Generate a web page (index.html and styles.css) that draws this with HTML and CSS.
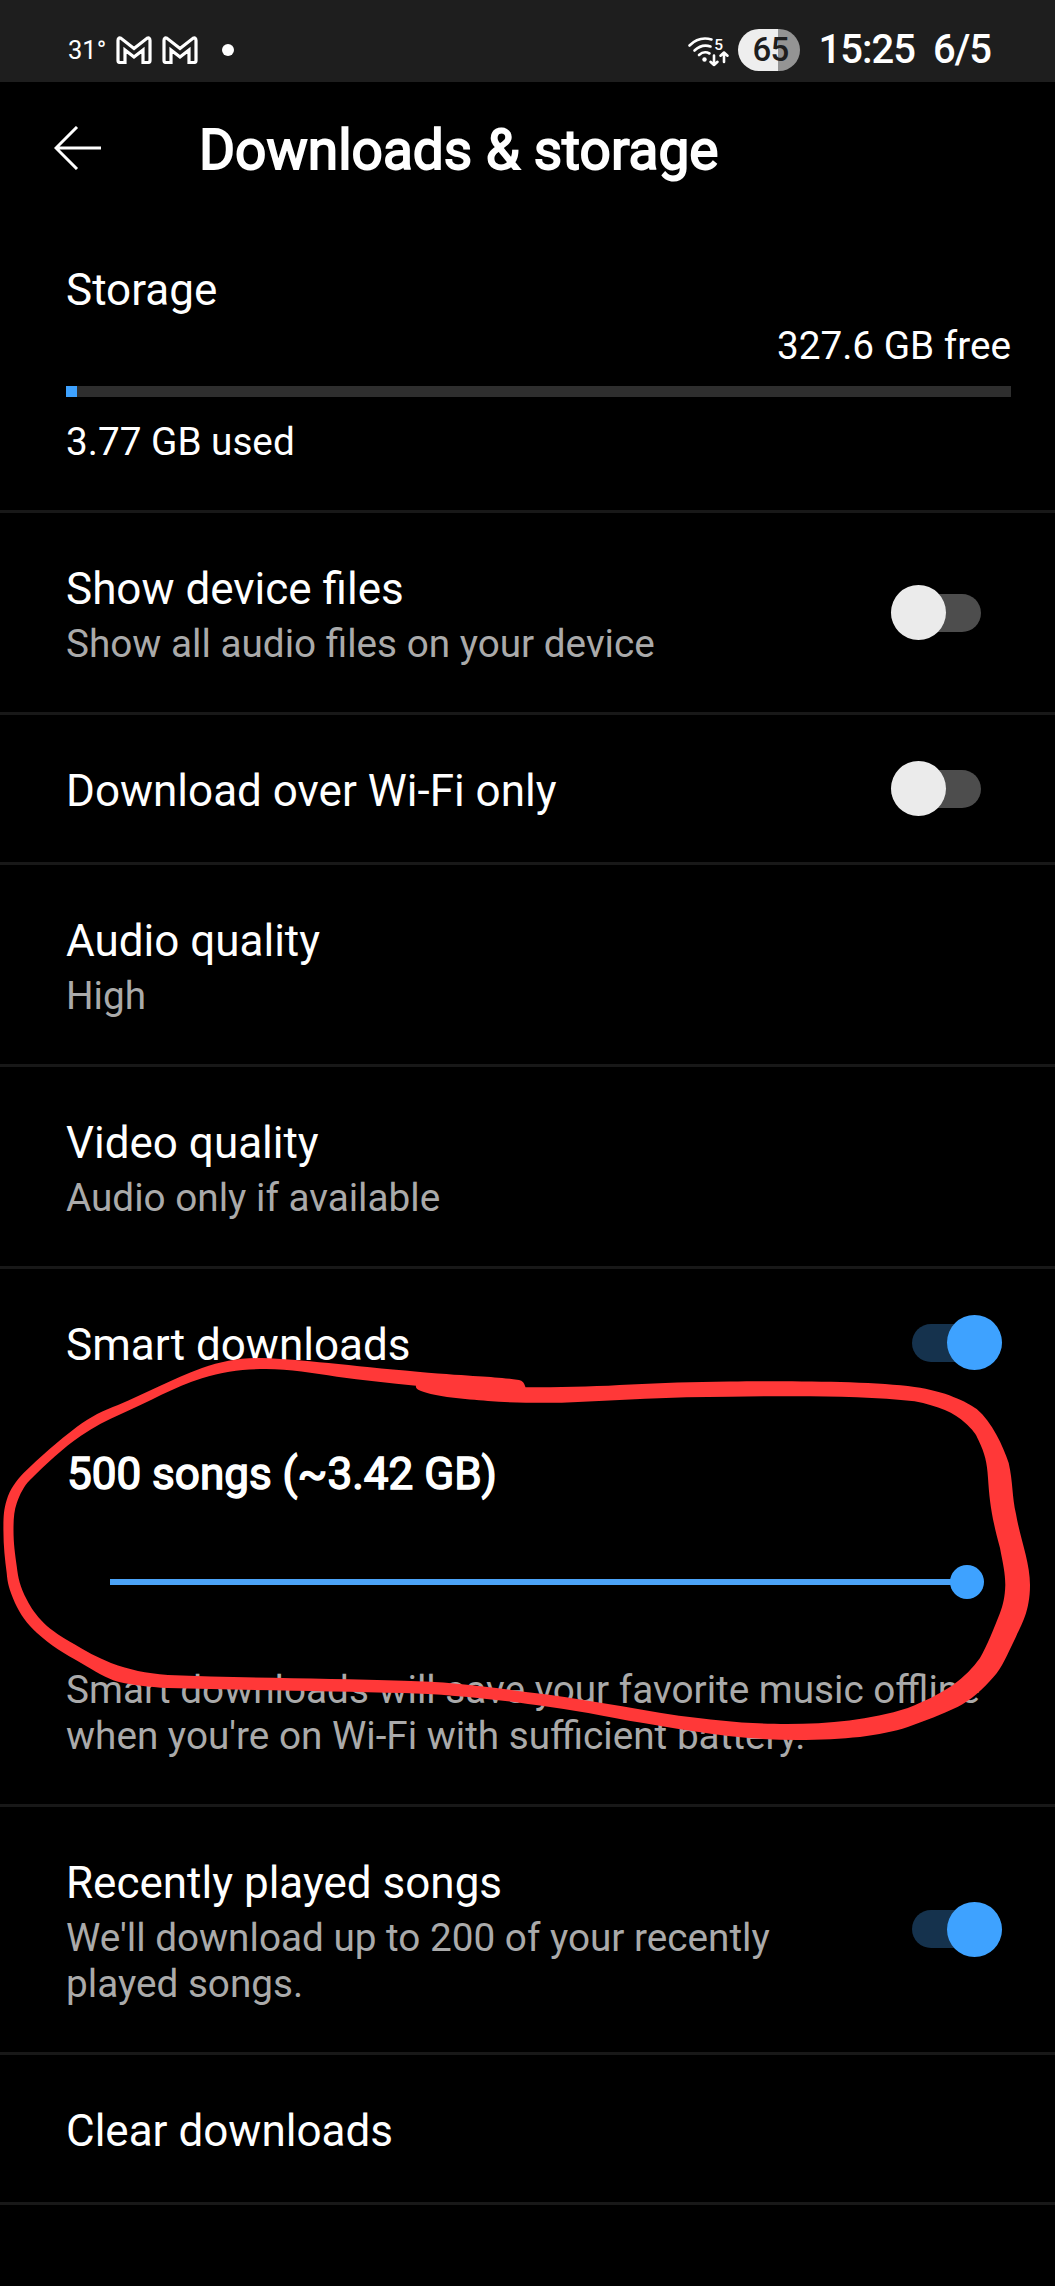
FILE: index.html
```html
<!DOCTYPE html>
<html lang="en">
<head>
<meta charset="utf-8">
<title>Downloads &amp; storage</title>
<link rel="stylesheet" href="styles.css">
</head>
<body>
<div class="screen">
  <div class="statusbar">
    <div class="status-left">
      <span class="temp">31°</span>
      <svg class="mail" viewBox="0 0 36 28"><path d="M2 4.500Q2 1 5 2.300L18 12.500 31 2.300Q34 1 34 4.500V24.500Q34 26.500 32 26.500H27V14L18 21 9 14V26.500H4Q2 26.500 2 24.500Z"/></svg>
      <svg class="mail" viewBox="0 0 36 28"><path d="M2 4.500Q2 1 5 2.300L18 12.500 31 2.300Q34 1 34 4.500V24.500Q34 26.500 32 26.500H27V14L18 21 9 14V26.500H4Q2 26.500 2 24.500Z"/></svg>
      <span class="dot"></span>
    </div>
    <div class="status-right">
      <svg class="wifi" viewBox="0 0 42 32">
        <g class="waves">
          <path d="M2.500 11.500Q12 2 24.500 5.500"/>
          <path d="M7.500 16.500Q15 9.500 23.500 12.500"/>
          <path d="M12 21Q17 16.500 22.500 19.500"/>
          <path d="M27 21.500V31M23.500 27.800L27 31 30.500 27.800"/>
          <path d="M37 28V18.500M33.500 21.700L37 18.500 40.500 21.700"/>
        </g>
        <circle cx="17.500" cy="25.500" r="2.200"/>
        <text x="27.300" y="16">5</text>
      </svg>
      <span class="battery">65</span>
      <span class="clock">15:25</span>
      <span class="date">6/5</span>
    </div>
  </div>

  <header class="appbar">
    <svg class="back" viewBox="0 0 48 44"><path d="M23 1L2 22 23 43M2 22H47"/></svg>
    <h1>Downloads &amp; storage</h1>
  </header>

  <section class="storage">
    <div class="title">Storage</div>
    <div class="free">327.6 GB free</div>
    <div class="meter"><div class="meter-fill"></div></div>
    <div class="used">3.77 GB used</div>
  </section>

  <section class="row">
    <div class="label"><div class="title">Show device files</div><div class="sub">Show all audio files on your device</div></div>
    <div class="toggle"></div>
  </section>
  <section class="row">
    <div class="label"><div class="title">Download over Wi-Fi only</div></div>
    <div class="toggle"></div>
  </section>
  <section class="row">
    <div class="label"><div class="title">Audio quality</div><div class="sub">High</div></div>
  </section>
  <section class="row">
    <div class="label"><div class="title">Video quality</div><div class="sub">Audio only if available</div></div>
  </section>

  <section class="smart">
    <div class="row plain">
      <div class="label"><div class="title">Smart downloads</div></div>
      <div class="toggle on"></div>
    </div>
    <div class="amount">500 songs (~3.42 GB)</div>
    <div class="slider"><div class="slider-track"></div><div class="slider-knob"></div></div>
    <div class="note">Smart downloads will save your favorite music offline<br>when you're on Wi-Fi with sufficient battery.</div>
    <!-- hand-drawn loop around the song limit -->
    <svg class="scribble" viewBox="0 1269 1055 538">
      <path fill-rule="evenodd" d="M262 1358C300 1359 350 1366 417.5 1371.7S490 1376 519 1380Q524 1381 525.5 1387.3C600 1388 650 1382 729.7 1381.5C790 1381 870 1381 914.6 1387C945 1391 967 1402 976.7 1409C992 1422 1003 1446 1008.7 1463C1013 1482 1012 1497 1016 1514C1020 1538 1030 1562 1030 1585C1030 1613 1020 1627 1015.4 1638C1007 1655 1002 1668 993.5 1677C983 1689 970 1701 958 1706.7C942 1714 925 1721 907.8 1727C880 1736 845 1740 797 1740C735 1740 680 1729 629 1720.7C590 1713 560 1708 528 1704C485 1698 440 1694 404 1693C330 1691 240 1690 168 1688C148 1687 133 1685 118 1681.7C105 1678 95 1671 81 1663C65 1654 50 1645 37 1633C27 1624 20 1614 15 1603C9 1589 7.5 1583 6.7 1573C5 1560 3.4 1546 3.4 1530C3.4 1518 3.5 1510 6.7 1500C10 1489 16 1481 23.6 1473C40 1457 58 1441 77 1426.7C90 1417 104 1410 118 1405C146 1393 172 1379 202 1368C222 1361 240 1358 262 1358Z
      M266 1369C290 1369 313 1373 337 1376.7C362 1380 390 1383 416 1385.7Q415 1389 421 1391C436 1397 465 1399 488 1401C515 1403 540 1403 561.6 1402.7C620 1400 670 1396.7 729.7 1396.7C790 1396 860 1395 914.6 1401.3C938 1406 955 1413 965 1422.7C973 1430 976 1434 978.4 1440C985 1454 987 1462 988 1478C989.5 1500 991 1515 1000 1548C1003 1564 1005.3 1573 1005.3 1585C1005 1597 1003 1605 1000 1613C994 1628 987 1646 980 1658C973 1668 964 1677 953 1685C938 1695 925 1701 907.8 1708C870 1720 830 1724 786.8 1724C745 1724 715 1720 679 1715.7C627 1708 580 1698 528 1692.3C485 1686 445 1681.5 404 1680.7C330 1678 240 1678 168 1675C145 1673 130 1670 111 1663C97 1657 85 1651 74 1644C62 1637 52 1631 43.8 1623C36 1615 31 1608 27 1600C20 1587 18 1577 16.8 1566.7C15 1553 13.5 1544 13.5 1530C13.5 1519 14 1511 16.8 1503C20 1494 24 1486 30 1480C46 1464 63 1448 81 1435.7C94 1427 107 1420 121 1414C149 1402 174 1387 202 1378.3C224 1371 245 1369 266 1369Z"/>
    </svg>
  </section>

  <section class="row">
    <div class="label"><div class="title">Recently played songs</div><div class="sub">We'll download up to 200 of your recently<br>played songs.</div></div>
    <div class="toggle on"></div>
  </section>
  <section class="row">
    <div class="label"><div class="title">Clear downloads</div></div>
  </section>
</div>
</body>
</html>
```
FILE: styles.css
```css
* { box-sizing: border-box; }
body { margin: 0; background: #000; color: #fff; font-family: Roboto, sans-serif; }
.screen { width: 1055px; height: 2286px; overflow: hidden; }

/* Status bar */
.statusbar { height: 82px; background: #1e1e1e; display: flex; justify-content: space-between; padding: 17px 64px 0 68px; }
.status-left, .status-right { display: flex; align-items: center; height: 65px; }
.temp { font-size: 25.5px; line-height: 30px; width: 48px; }
.mail { width: 36px; height: 28px; margin-right: 10px; fill: none; stroke: #fff; stroke-width: 3.2; }
.dot { width: 12px; height: 12px; border-radius: 50%; background: #fff; margin-left: 14px; }
.wifi { width: 42px; height: 32px; margin-right: 9px; fill: #fff; overflow: visible; }
.waves { fill: none; stroke: #fff; stroke-width: 2.6; stroke-linecap: round; stroke-linejoin: round; }
.wifi text { font: 500 15.5px Roboto, sans-serif; }
.battery { width: 62px; height: 42px; border-radius: 21px; background: linear-gradient(90deg, #eee 40px, #949494 40px); color: #1e1e1e; font-size: 33px; font-weight: 500; line-height: 41px; text-align: center; padding-left: 2px; letter-spacing: -0.8px; }
.clock, .date { font-size: 40px; font-weight: 500; line-height: 46px; letter-spacing: -1px; }
.clock { margin-left: 18px; }
.date { margin-left: 18px; }

/* App bar */
.appbar { height: 148px; display: flex; padding: 35px 0 0 54px; }
.back { width: 48px; height: 44px; margin-top: 9px; fill: none; stroke: #fff; stroke-width: 3; }
h1 { margin: 0 0 0 97px; font-size: 55px; line-height: 66px; font-weight: 400; -webkit-text-stroke: 1.8px #fff; }

/* Storage meter */
.storage { height: 283px; padding: 32px 44px 0 66px; border-bottom: 3px solid #181818; }
.title { font-size: 44px; line-height: 56px; }
.free, .used { font-size: 38.7px; line-height: 46px; }
.free { text-align: right; margin-top: 5px; }
.meter { height: 11px; background: #2e2e2e; margin-top: 17px; }
.meter-fill { width: 11px; height: 11px; background: #3ea2ff; }
.used { margin-top: 22px; }

/* Settings rows */
.row { display: flex; justify-content: space-between; align-items: center; padding: 48px 74px 43px 66px; border-bottom: 3px solid #181818; }
.row.plain { border: 0; }
.sub, .note { font-size: 38.7px; line-height: 45.5px; color: #aaa; }
.sub { margin: 4px 0 2.5px; }
.toggle { width: 90px; height: 38px; margin-bottom: 5px; border-radius: 19px; background: #4d4d4d; display: flex; align-items: center; }
.toggle::before { content: ""; width: 55px; height: 55px; border-radius: 50%; background: #ebebeb; flex: none; }
.toggle.on { margin-right: -21px; background: #15324d; justify-content: flex-end; }
.toggle.on::before { background: #3ea2ff; }

/* Smart downloads */
.smart { position: relative; height: 538px; border-bottom: 3px solid #181818; }
.amount { font-size: 44px; line-height: 56px; -webkit-text-stroke: 1.5px #fff; padding-left: 67px; margin-top: 30px; }
.slider { display: flex; align-items: center; height: 34px; margin: 63px 0 68px; padding-left: 110px; }
.slider-track { width: 857px; height: 6px; background: #4ba3f7; }
.slider-knob { width: 34px; height: 34px; margin-left: -17px; border-radius: 50%; background: #3ea2ff; }
.note { padding-left: 66px; }
.scribble { position: absolute; left: 0; top: 0; width: 1055px; height: 538px; fill: #ff3838; }
```
